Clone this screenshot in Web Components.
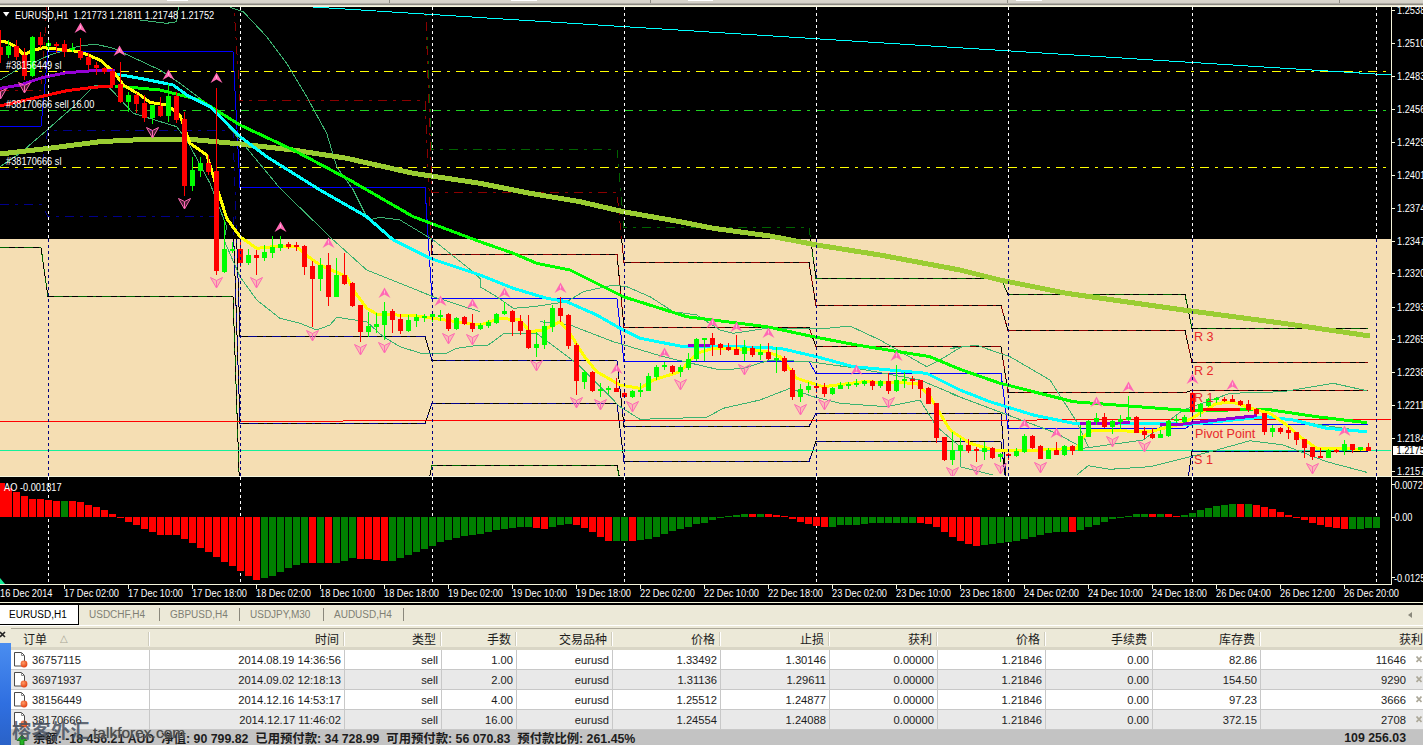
<!DOCTYPE html>
<html><head><meta charset="utf-8"><title>MT4</title>
<style>html,body{margin:0;padding:0;background:#000;overflow:hidden}</style></head>
<body>
<mt-app>
  <mt-strip slot="strip"></mt-strip>
  <mt-chart></mt-chart>
  <mt-tabs>
    <mt-tab active>EURUSD,H1</mt-tab><mt-tab style="width:81px">USDCHF,H4</mt-tab><mt-tab style="width:80px">GBPUSD,H4</mt-tab><mt-tab style="width:84px">USDJPY,M30</mt-tab><mt-tab style="width:80px">AUDUSD,H4</mt-tab>
  </mt-tabs>
  <mt-terminal>
    <mt-head>
      <mt-hcell first>订单<i>△</i></mt-hcell><mt-hcell>时间</mt-hcell><mt-hcell>类型</mt-hcell><mt-hcell>手数</mt-hcell><mt-hcell>交易品种</mt-hcell><mt-hcell>价格</mt-hcell><mt-hcell>止损</mt-hcell><mt-hcell>获利</mt-hcell><mt-hcell>价格</mt-hcell><mt-hcell>手续费</mt-hcell><mt-hcell>库存费</mt-hcell><mt-hcell last>获利</mt-hcell>
    </mt-head>
    <mt-row order="36757115" data-v="2014.08.19 14:36:56|sell|1.00|eurusd|1.33492|1.30146|0.00000|1.21846|0.00|82.86|11646"></mt-row>
    <mt-row alt order="36971937" data-v="2014.09.02 12:18:13|sell|2.00|eurusd|1.31136|1.29611|0.00000|1.21846|0.00|154.50|9290"></mt-row>
    <mt-row order="38156449" data-v="2014.12.16 14:53:17|sell|4.00|eurusd|1.25512|1.24877|0.00000|1.21846|0.00|97.23|3666"></mt-row>
    <mt-row alt order="38170666" data-v="2014.12.17 11:46:02|sell|16.00|eurusd|1.24554|1.24088|0.00000|1.21846|0.00|372.15|2708"></mt-row>
    <mt-summary total="109 256.03">余额: -18 456.21 AUD&nbsp; 净值: 90 799.82&nbsp; 已用预付款: 34 728.99&nbsp; 可用预付款: 56 070.83&nbsp; 预付款比例: 261.45%</mt-summary>
  </mt-terminal>
</mt-app>
<script>
const FONT='"Liberation Sans","Noto Sans CJK SC",sans-serif';
function def(name,css,html,init){
  customElements.define(name,class extends HTMLElement{
    connectedCallback(){
      if(this.shadowRoot)return;
      const s=this.attachShadow({mode:'open'});
      s.innerHTML='<style>'+css+'</style>'+(typeof html==='function'?html(this):html);
      if(init)init(this,s);
    }
  });
}
def('mt-app',`:host{display:flex;flex-direction:column;width:1423px;height:745px;overflow:hidden;background:#000;font-family:${FONT}}`,'<slot name="strip"></slot><slot></slot>');
def('mt-strip',`:host{display:flex;flex:none;height:6px;background:linear-gradient(#d9d6cb 0,#d4d0c8 3px,#8b8980 4px,#8b8980 5px,#e8e4d4 5px);}
 b{display:block;height:1px;background:#fff;flex:none} u{display:block;height:3px;width:1px;background:#8f8d85;flex:none}`,
 ()=>{const seq=[[167,21,'b'],[389,1,'u'],[511,26,'b'],[650,1,'u'],[688,25,'b'],[1007,1,'u'],[1016,26,'b'],[1339,1,'u']];let x=0,o='';
   seq.forEach(([p,w,t])=>{o+=`<${t} style="margin-left:${p-x}px;width:${w}px"></${t}>`;x=p+w});return o});

/* ---------- chart ---------- */
const z=(dx,dy,a)=>{const o=[];for(let i=0;i<a.length;i+=2)o.push([(a[i]+dx)/3,(a[i+1]+dy)/3]);return o};
const pl=(p,c,w,extra='')=>`<polyline points="${p.map(q=>q[0].toFixed(1)+','+q[1].toFixed(1)).join(' ')}" fill="none" stroke="${c}" stroke-width="${w}" ${extra}/>`;
const CANDLES="r140,165,90,190 g138,165,120,175 r138,172,120,180 r165,228,145,240 g110,228,108,230 r110,135,95,145 g130,138,120,150 r131,134,125,160 r132,155,120,170 g144,147,130,155 r152,175,115,180 r172,196,160,210 r195,205,185,225 r203,215,200,222 r213,255,205,258 r252,306,185,310 g285,306,275,335 r286,312,280,340 r309,354,285,365 g315,354,315,372 r317,348,290,350 g288,348,252,365 r288,360,275,370 r357,558,335,588 g510,558,470,572 g489,513,470,530 r489,516,465,525 r513,812,265,825 g748,815,660,820 g748,752,725,760 r747,790,725,800 g765,790,748,795 r765,773,750,825 g756,773,735,782 g741,759,708,775 g732,744,708,752 r732,741,726,748 r736,739,726,752 r738,800,735,825 r798,837,783,980 g795,837,775,873 r795,890,760,918 g825,890,775,890 r825,852,760,856 r850,918,846,920 r915,996,915,1025 g978,996,935,1012 g971,981,938,998 g933,975,905,1020 r933,960,928,998 r957,993,942,1003 g960,993,945,995 g951,963,942,980 g949,954,942,965 g942,951,940,965 g944,948,930,963 r942,987,940,993 g954,987,952,989 r952,972,948,975 r970,987,942,996 g975,987,970,990 g967,979,960,985 g942,970,938,972 g933,942,906,945 r933,966,930,1008 r963,993,945,1005 r990,1044,945,1047 g1032,1044,995,1072 g978,1035,960,1047 g924,981,915,995 r924,948,892,966 r945,1038,942,1047 r1035,1143,1028,1185 g1116,1146,1110,1167 r1116,1173,1112,1176 g1168,1172,1150,1190 g1164,1168,1158,1182 r1164,1176,1135,1176 r1179,1191,1170,1192 g1173,1191,1170,1195 g1171,1175,1148,1190 g1128,1173,1120,1173 g1101,1131,1095,1140 g1096,1100,1085,1110 r1098,1116,1095,1122 g1101,1116,1095,1131 g1077,1104,1060,1110 g1017,1077,1014,1082 g1015,1019,1015,1082 r1014,1035,1000,1068 r1032,1044,1030,1065 r1041,1050,1028,1053 r1047,1065,1005,1065 g1041,1062,1020,1082 r1044,1065,1038,1072 g1056,1065,1032,1080 r1056,1077,1030,1080 g1073,1077,1040,1118 r1074,1113,1068,1116 r1110,1191,1105,1200 g1167,1191,1152,1206 g1158,1170,1145,1178 r1158,1162,1150,1180 r1161,1182,1150,1192 g1164,1182,1160,1185 g1155,1167,1145,1168 g1151,1155,1145,1168 g1150,1154,1138,1162 g1143,1152,1140,1158 r1143,1158,1140,1170 g1143,1158,1140,1165 r1143,1173,1120,1182 g1140,1173,1095,1176 g1138,1142,1115,1165 r1138,1142,1128,1167 r1140,1167,1140,1193 r1164,1212,1160,1212 r1209,1314,1209,1328 r1311,1380,1310,1384 g1350,1380,1297,1395 g1335,1352,1315,1370 r1335,1353,1318,1360 r1348,1352,1340,1385 g1344,1356,1325,1380 r1344,1374,1342,1377 g1362,1371,1360,1385 r1362,1366,1358,1380 g1353,1368,1345,1372 g1308,1356,1302,1360 r1308,1344,1305,1347 r1338,1377,1335,1377 g1350,1377,1345,1377 r1350,1365,1325,1365 g1338,1365,1336,1367 r1338,1353,1335,1365 g1308,1353,1275,1353 g1263,1311,1260,1310 g1254,1266,1238,1275 r1251,1281,1238,1283 g1263,1281,1260,1302 g1257,1266,1245,1288 g1251,1260,1188,1263 r1251,1299,1248,1299 r1293,1305,1280,1317 r1302,1314,1285,1317 g1302,1314,1290,1314 g1263,1308,1260,1310 g1258,1262,1248,1268 g1251,1265,1245,1268 r1179,1236,1170,1250 g1212,1236,1210,1250 g1197,1218,1195,1220 g1195,1199,1192,1210 r1196,1199,1192,1205 r1197,1206,1185,1206 r1203,1215,1200,1217 r1212,1230,1200,1236 r1227,1242,1225,1245 r1239,1296,1239,1305 g1284,1296,1275,1312 r1284,1296,1281,1302 r1290,1299,1282,1317 r1296,1320,1295,1335 r1317,1344,1317,1375 r1341,1371,1341,1380 r1368,1374,1345,1374 g1350,1374,1348,1375 r1349,1352,1348,1360 g1332,1353,1320,1365 r1332,1350,1332,1358 g1341,1350,1341,1352 r1341,1353,1328,1353".split(' ');
const AO="r25 r38 r50 r62 r72 r72 r75 r78 g78 r78 r81 r90 r96 r105 r117 r128 r141 r150 r162 r171 r180 r180 r180 r192 r204 r220 r232 r246 r262 r273 r288 r303 r315 g309 g303 g291 g279 g270 g264 r264 g264 r264 g264 g258 g249 r252 r252 r255 r258 g258 g249 g240 g231 g222 g213 g201 g195 g189 g183 g180 g177 g171 g165 g162 g159 g156 g156 r159 r162 g156 g150 g147 r150 r159 r171 r186 r198 g198 g198 r198 g195 g192 g186 g177 g168 g162 g156 g147 g144 g135 g129 g122 g120 g118 r117 g118 r117 r119 r123 r132 r141 r147 r153 r156 g156 g150 g150 g150 g147 g144 g144 g144 g144 g144 g144 r144 r147 r156 r171 r186 r198 r207 r213 g210 g207 g204 g201 g198 g192 g186 g180 g174 g171 g171 r171 g165 g156 g150 g141 g131 g127 g123 g117 g117 r117 g117 r117 r123 g120 g114 g105 g99 g93 g90 g87 r87 g87 r90 r96 r102 r111 r120 r127 r136 r144 r150 r156 r159 r162 g162 g162 g159 g159".split(' ');
const UP=[[80,28],[119,51],[168,75],[216,78],[280,227],[328,243],[384,293],[440,301],[472,304],[504,293],[560,288],[616,369],[664,353],[712,323],[736,327],[768,333],[856,370],[896,356],[1024,424],[1056,433],[1096,402],[1128,387],[1192,379],[1232,385],[1344,431]];
const DN=[[24,87],[0,93],[152,132],[184,203],[216,282],[256,282],[312,335],[360,349],[384,347],[448,338],[472,339],[536,365],[576,402],[600,404],[632,406],[680,384],[744,369],[800,409],[824,404],[888,402],[952,472],[976,469],[1000,468],[1040,467],[1112,441],[1144,446],[1312,468]];
const DAYS=[[0,41],[48,233],[240,425],[432,617],[624,809],[816,1001],[1008,1185],[1192,1368]];
const TRACKS=[
 ['#006400',[,,-9,149,227,278,294,328]],
 ['#8b0000',[,,-9,192,262,305,330,362]],
 ['#8b0000',[,-9,100,254,327,346,392,390]],
 ['#00008b',[169,130,336,360,426,413,500,451]],
 ['#00008b',[204,216,423,403,461,441,500,500]],
 ['#006400',[247,296,500,465,500,500,500,500]],
];
const PIVOT=[126,51,187,298,361,373,428,424];
function track(vals){const p=[];DAYS.forEach((d,i)=>{if(vals[i]==null)return;p.push([d[0],vals[i]+.5],[d[1],vals[i]+.5])});return p}
const tx=(x,y,t,fill='')=>`<text transform="translate(${x} ${y}) scale(.925 1)" ${fill?`fill="${fill}"`:''}>${t}</text>`;
function chartSVG(){
 let s='';
 s+=`<rect x="0" y="6" width="1423" height="598" fill="#000"/>`;
 s+=`<rect x="0" y="239" width="1391" height="237" fill="#f5deb3"/>`;
 s+=`<g clip-path="url(#main)" shape-rendering="crispEdges">`;
 s+=pl([[0,90.5],[41,90.5],[48,-9]],'#8b0000',1,'stroke-dasharray="9 6 3 6"');
 TRACKS.forEach(([c,v])=>{const p=track(v);s+=pl(p,'#000',1);s+=pl(p,c,1,'stroke-dasharray="9 6 3 6"')});
 s+=pl(track(PIVOT),'#0000ff',1);
 s+=`<g stroke-dasharray="9 6 3 6" stroke-width="1"><line x1="0" x2="1387" y1="71.5" y2="71.5" stroke="#ffff00"/><line x1="0" x2="1387" y1="110.5" y2="110.5" stroke="#1fd21f"/><line x1="0" x2="1387" y1="167.5" y2="167.5" stroke="#ffff00"/></g>`;
 s+=`<line x1="313" y1="7" x2="1391" y2="75" stroke="#00ffff" stroke-width="1"/>`;
 s+=`<line x1="0" y1="421.5" x2="1391" y2="419.5" stroke="#ff0000" stroke-width="1"/>`;
 s+=`<line x1="0" y1="450.5" x2="1391" y2="450.5" stroke="#14f09a" stroke-width="1"/>`;
 const B='#3cb371';
 s+=pl(z(0,0,[420,60,500,70,530,65,535,22]),B,1);
 s+=pl(z(0,0,[0,240,50,210,150,165,230,140,285,132,340,145,480,210,540,250,620,310,650,340,720,420,840,565,1000,720]).concat(z(0,720,[1100,90,1300,170,1440,215])),B,1);
 s+=pl(z(0,0,[690,22,730,35,800,110,860,190,920,290,980,400,1010,500,1060,570,1105,660,1140,652,1200,660,1300,720]).concat(z(0,720,[1400,80,1440,115])).concat(z(1440,720,[0,140,50,170,100,205,160,200,260,185,310,155,400,135,440,140,510,170,580,215,650,225,720,270,760,280,860,265,930,265,1040,265,1110,258,1200,300,1340,380,1380,360,1440,323])).concat(z(2850,720,[0,325,80,316,180,350,300,420,380,545,415,620])),B,1);
 s+=pl(z(0,0,[0,500,60,460,130,400,220,320,285,255,330,265,400,340,530,380,560,420,630,550,680,680]).concat(z(0,720,[672,0,720,110,770,180,840,235,900,250,950,270,990,255,1010,232,1100,245,1150,290,1200,320,1270,342,1340,340,1370,325,1440,315])).concat(z(1440,720,[0,315,25,315,70,282,170,280,290,370,420,500,480,538,680,532,730,505,840,480,930,445,1000,470,1080,490,1220,500,1320,480,1370,560,1440,620])).concat(z(2850,720,[30,680,130,705])),B,1);
 s+=pl(z(1440,720,[180,245,270,255,400,305,550,350,720,390,790,385,870,360,990,365,1130,385,1320,420,1440,470])
   .concat(z(2850,720,[0,460,160,520,320,580,400,625,580,600,700,510,840,460,1000,455,1150,430,1250,452])),B,1);
 s+=pl(z(2850,720,[380,705,415,677,480,688,600,680,720,650,800,630,900,602,1000,615,1130,665,1250,697]),B,1);
 s+=pl(z(2850,720,[950,530,1250,575]),B,1);
 s+=pl(z(0,0,[0,462,130,447,300,425,440,418,560,417,700,430,880,450,1040,475,1240,520,1440,550]).concat(z(1440,0,[140,578,300,605,430,635,600,665,700,685,870,708,1010,735])).concat(z(1440,720,[1200,45,1440,90])).concat(z(2850,720,[150,120,350,160,700,210,1000,250,1260,288])),'#9acd32',5);
 s+=pl(z(0,0,[345,258,480,270,600,300,640,325,720,375,880,450,1040,535,1240,650,1440,725]).concat(z(1440,720,[100,40,170,70,270,90,430,170,620,230,860,260,1000,290,1130,315,1350,350,1440,388])).concat(z(2850,720,[150,430,370,485,720,512,950,508,1100,530,1250,548])),'#00ff00',3);
 s+=pl(z(0,0,[345,222,420,235,520,255,560,285,630,320,720,410,800,470,960,570,1100,650,1180,720]).concat(z(0,720,[1290,55,1440,105])).concat(z(1440,720,[100,145,200,175,260,185,350,225,420,265,480,295,600,318,720,318,900,325,1010,350,1120,380,1340,400,1440,450])).concat(z(2850,720,[120,485,250,525,370,550,600,550,720,553,950,530,1030,540,1130,565,1250,575])),'#00ffff',3);
 s+=pl(z(0,0,[0,122,25,128,48,140,72,165,96,152,130,143,180,148,240,155,300,180,340,215,370,255,420,285,450,307,500,315,540,345,570,430,620,465,650,560,680,655,720,710]).concat(z(0,720,[770,25,840,18,890,20,925,50,960,75,1040,110,1060,150,1100,205,1130,222,1250,228,1440,255])).concat(z(1440,720,[60,235,120,240,150,275,190,270,240,245,270,280,310,345,350,395,420,435,480,445,520,420,600,395,650,340,700,325,760,325,860,335,900,350,950,415,1030,440,1150,425,1310,430,1350,470,1410,570])).concat(z(2850,720,[60,610,130,630,270,630,380,625,400,590,430,570,600,575,700,550,750,520,800,490,850,487,920,510,960,520,1010,555,1050,590,1100,625,1250,628])),'#ffff00',3);
 s+=pl(z(0,0,[0,265,60,255,130,232,200,218,280,212,345,213]),'#9400d3',3);
 s+=pl(z(1440,720,[625,316,690,316]),'#9400d3',3);
 s+=pl(z(2850,720,[390,552,540,548]),'#9400d3',3);
 s+=pl(z(2850,720,[630,555,700,552,800,540,920,527]),'#9400d3',3);
 s+=pl(z(0,0,[0,318,100,295,200,272,280,262,340,258]),'#ff0000',3);
 s+=pl(z(2850,720,[750,507,870,507]),'#ff0000',3);
 CANDLES.forEach((c,k)=>{const col=c[0]=='r'?'#ff0000':'#00ff00';const [a,b,w1,w2]=c.slice(1).split(',').map(Number);
   const x=8*k,t=Math.round(a/3),bb=Math.max(Math.round(b/3),t+2);
   const wt=Math.round(Math.min(w1,a)/3),wb=Math.round(Math.max(w2,b)/3);
   s+=`<rect x="${x}" y="${wt}" width="1" height="${wb-wt}" fill="${col}"/><rect x="${x-2}" y="${t}" width="5" height="${bb-t}" fill="${col}"/>`;});
 s+=`</g>`;
 const FC='#ff69b4';
 s+=`<g clip-path="url(#main)">`;
 UP.forEach(([x,y])=>{x+=.5;s+=`<path d="M${x-6} ${y+5}L${x} ${y-5.5}L${x+6} ${y+5}L${x} ${y+1.5}Z" fill="${FC}"/><path d="M${x} ${y-2.5}V${y+.5}" stroke="#ffb6d9" stroke-width="1"/>`});
 DN.forEach(([x,y])=>{x+=.5;s+=`<path d="M${x-6} ${y-4.5}L${x} ${y+6}L${x+6} ${y-4.5}L${x} ${y-1.5}Z" fill="${FC}" fill-opacity=".3" stroke="${FC}" stroke-width="1"/><path d="M${x} ${y-1}V${y+5}" stroke="${FC}" stroke-width="1"/>`});
 s+=`</g>`;
 [48,240,432,624,816,1008,1192,1376].forEach(x=>{
   s+=`<g shape-rendering="crispEdges" stroke-dasharray="3 3"><line x1="${x+.5}" x2="${x+.5}" y1="7" y2="239" stroke="#fff"/><line x1="${x+.5}" x2="${x+.5}" y1="239" y2="476" stroke="#000080"/><line x1="${x+.5}" x2="${x+.5}" y1="477" y2="584" stroke="#fff"/></g>`;});
 s+=`<g shape-rendering="crispEdges">`;
 AO.forEach((c,k)=>{const col=c[0]=='r'?'#ff0000':'#008000';const y=Math.round(475+(+c.slice(1))/3);const t=Math.min(y,517),b=Math.max(y,517);
   s+=`<rect x="${Math.max(0,8*k-3)}" y="${t}" width="${k==0?5:7}" height="${Math.max(b-t,1)}" fill="${col}"/>`;});
 s+=`</g>`;
 s+=`<polygon points="0,578 5,584 0,584" fill="#14f09a"/>`;
 const L='#f5f5dc';
 s+=`<g fill="${L}" shape-rendering="crispEdges"><rect x="0" y="6" width="1423" height="1"/><rect x="0" y="476" width="1423" height="1"/><rect x="0" y="584" width="1391" height="1"/><rect x="1391" y="6" width="1" height="579"/><rect x="0" y="602" width="1423" height="1"/>`;
 const prices=[['1.2538',10],['1.2510',43],['1.2483',76],['1.2456',109],['1.2429',142],['1.2401',175],['1.2374',208],['1.2347',241],['1.2320',273],['1.2293',307],['1.2265',339],['1.2238',372],['1.2211',405],['1.2184',438],['1.2157',471]];
 prices.forEach(p=>s+=`<rect x="1392" y="${p[1]}" width="3" height="1"/>`);
 [484,517,577].forEach(y=>s+=`<rect x="1392" y="${y}" width="3" height="1"/>`);
 for(let x=64;x<1391;x+=64)s+=`<rect x="${x}" y="585" width="1" height="4"/>`;
 s+=`</g>`;
 s+=`<g font-family='"Liberation Sans",sans-serif' font-size="10" fill="#fff">`;
 prices.forEach(p=>s+=tx(1397,p[1]+4,p[0]));
 s+=tx(1394.5,488.5,'0.00725')+tx(1394.5,520.5,'0.00')+tx(1394,581.5,'-0.0125');
 const T=['16 Dec 2014','17 Dec 02:00','17 Dec 10:00','17 Dec 18:00','18 Dec 02:00','18 Dec 10:00','18 Dec 18:00','19 Dec 02:00','19 Dec 10:00','19 Dec 18:00','22 Dec 02:00','22 Dec 10:00','22 Dec 18:00','23 Dec 02:00','23 Dec 10:00','23 Dec 18:00','24 Dec 02:00','24 Dec 10:00','24 Dec 18:00','26 Dec 04:00','26 Dec 12:00','26 Dec 20:00'];
 T.forEach((t,i)=>s+=tx(i*64,597,t));
 s+=tx(15,18.5,'EURUSD,H1&#160; 1.21773 1.21811 1.21748 1.21752');
 s+=tx(6,69,'#38156449 sl')+tx(6,108,'#38170666 sell 16.00')+tx(6,165,'#38170666 sl');
 s+=tx(4,491,'AO -0.001817');
 s+=`</g><polygon points="3,12 9.5,12 6.2,16.5" fill="#fff"/>`;
 s+=`<g font-family='"Liberation Sans",sans-serif' font-size="12.6" fill="#e8262a"><text x="1194" y="341">R 3</text><text x="1194" y="375">R 2</text><text x="1194" y="402">R 1</text><text x="1195" y="437.5">Pivot Point</text><text x="1194" y="464">S 1</text></g>`;
 s+=`<rect x="1393" y="446" width="30" height="9" fill="#fff"/><g font-family='"Liberation Sans",sans-serif' font-size="10">${tx(1396.5,454,'1.2175','#000')}</g>`;
 return `<svg xmlns="http://www.w3.org/2000/svg" width="1423" height="598" viewBox="0 6 1423 598"><defs><clipPath id="main"><rect x="0" y="7" width="1391" height="469"/></clipPath></defs>${s}</svg>`;
}
def('mt-chart',`:host{display:block;flex:none;width:1423px;height:598px;overflow:hidden} svg{display:block}`,()=>chartSVG());

def('mt-tabs',`:host{display:block;flex:none;height:24px;background:#ece9d8;position:relative;box-shadow:inset 0 1px 0 #000,inset 0 -3px 0 #ece9d8}
 .row{display:flex;height:20px;padding-top:1px;border-bottom:1px solid #fff;align-items:stretch;box-sizing:content-box}
 .arrow{margin-left:auto;margin-right:11px;align-self:center;width:0;height:0;border:3px solid transparent;border-right:4px solid #8a887c;border-left:0}`,
 '<div class="row"><slot></slot><span class="arrow"></span></div>');
def('mt-tab',`:host{display:flex;align-items:center;font-size:10px;color:#7f7f74;padding-left:10px;box-sizing:border-box;height:19px;position:relative}
 :host([active]){background:#fff;color:#000;width:79px;padding-left:9px;border-right:1px solid #000;border-bottom:1px solid #000;height:20px}
 :host(:not([active]))::after{content:"";position:absolute;right:0;top:3px;height:13px;width:1px;background:#8a887c}`,'<slot></slot>');

const COLS='139px 195px 97px 75px 96px 108px 109px 108px 108px 107px 108px 162px';
def('mt-terminal',`:host{display:block;flex:none;height:117px;position:relative;background:#ece9d8;--cols:${COLS};overflow:hidden;font-size:11.2px;color:#1c1c1c}
 .wrap{display:flex;height:100%}
 .side{width:11px;flex:none;display:flex;flex-direction:column;background:#ece9d8}
 .side svg{display:block;margin:3px 0 0 0;flex:none}
 .side i{flex:1;margin-top:4px;background:linear-gradient(180deg,#4a8df0,#2f6fe0 60%,#2a62c8)}
 .list{flex:1;min-width:0}
 .wm{position:absolute;left:12px;top:90px;display:flex;align-items:baseline;white-space:nowrap;pointer-events:none}
 .cn{font:700 19px "Noto Sans CJK SC",sans-serif;color:rgba(66,76,92,.82);letter-spacing:.5px;line-height:24px}
 .en{font:400 15.5px "Liberation Sans",sans-serif;color:#4c4c4c;margin-left:3px;text-shadow:0 0 1px #666,0 0 2px rgba(255,255,255,.6)}`,
 `<div class="wrap"><div class="side"><svg width="8" height="8" viewBox="0 0 8 8"><path d="M0 1L5 6M5 1L0 6" stroke="#222" stroke-width="1.6"/></svg><i></i></div><div class="list"><slot></slot></div></div>
 <div class="wm"><span class="cn">榕客外汇</span><span class="en">talkforex.com</span></div>`);
def('mt-head',`:host{display:grid;grid-template-columns:var(--cols);height:22px;box-sizing:border-box;background:#ece9d8;border-top:1px solid #aca899;border-bottom:3px solid #d9d6c6}`,'<slot></slot>');
def('mt-hcell',`:host{display:flex;justify-content:flex-end;align-items:center;font:12px "Noto Sans CJK SC",sans-serif;color:#1c1c1c;padding-right:6px;box-sizing:border-box;position:relative;white-space:nowrap}
 :host::after{content:"";position:absolute;right:0;top:3px;bottom:1px;width:2px;background:linear-gradient(90deg,#cfccbc 50%,#fff 50%)}
 :host([first]){justify-content:flex-start;padding-left:12px}
 :host([last]){padding-right:0;overflow:hidden;justify-content:flex-end;}
 :host([last])::after{display:none}
 ::slotted(i){font:normal 10px "DejaVu Sans",sans-serif;color:#a9a695;margin-left:13px}`,'<slot></slot>');
const ICON=`<svg width="16" height="17" viewBox="0 0 16 17" style="flex:none;display:block"><defs><radialGradient id="d" cx=".4" cy=".35" r=".7"><stop offset="0" stop-color="#ff9a66"/><stop offset="1" stop-color="#e03a0c"/></radialGradient></defs><path d="M1.5 1.5h7l3 3v10.5h-10z" fill="#fff" stroke="#4a4a4a"/><path d="M8.5 1.5v3h3" fill="none" stroke="#8a8a8a"/><circle cx="11" cy="13" r="3.4" fill="url(#d)"/></svg>`;
const CLOSE=`<svg width="6" height="7" viewBox="0 0 6 7" style="flex:none;margin-left:10px;margin-right:1px"><path d="M.5 .5L5.5 6M5.5 .5L.5 6" stroke="#aca899" stroke-width="1.7"/></svg>`;
def('mt-row',`:host{display:grid;grid-template-columns:var(--cols);height:20px;box-sizing:border-box;background:#fff;border-bottom:1px solid #c8c8c8}
 :host([alt]){background:#e9e9e9}
 .o{display:flex;align-items:center;justify-content:flex-start;padding-left:2px;gap:3px;border-right:1px solid #c8c8c8;height:19px;box-sizing:border-box}
 .c{display:flex;justify-content:flex-end;align-items:center;padding-right:3px;box-sizing:border-box;border-right:1px solid #c8c8c8;white-space:nowrap;height:19px}
 .c:last-child{border-right:0;padding-right:0}`,
 el=>{const v=el.dataset.v.split('|');let o=`<div class="o">${ICON}<span>${el.getAttribute('order')}</span></div>`;
   v.forEach((t,i)=>o+=`<div class="c">${t}${i==v.length-1?CLOSE:''}</div>`);return o});
def('mt-summary',`:host{display:flex;height:15px;background:#c3c3c3;align-items:center;font:700 12.35px "Liberation Sans","Noto Sans CJK SC",sans-serif;color:#1c1c1c;white-space:nowrap;position:relative}
 svg{margin:4px 5px 0 5px;flex:none} .t{margin-left:auto;margin-right:17px}`,
 el=>`<svg width="12" height="12" viewBox="0 0 12 12"><path d="M6 1L11 6.5H8V11H4V6.5H1Z" fill="#22b322" stroke="#116611" stroke-width=".8"/></svg><slot></slot><span class="t">${el.getAttribute('total')}</span>`);
</script>
</body></html>
